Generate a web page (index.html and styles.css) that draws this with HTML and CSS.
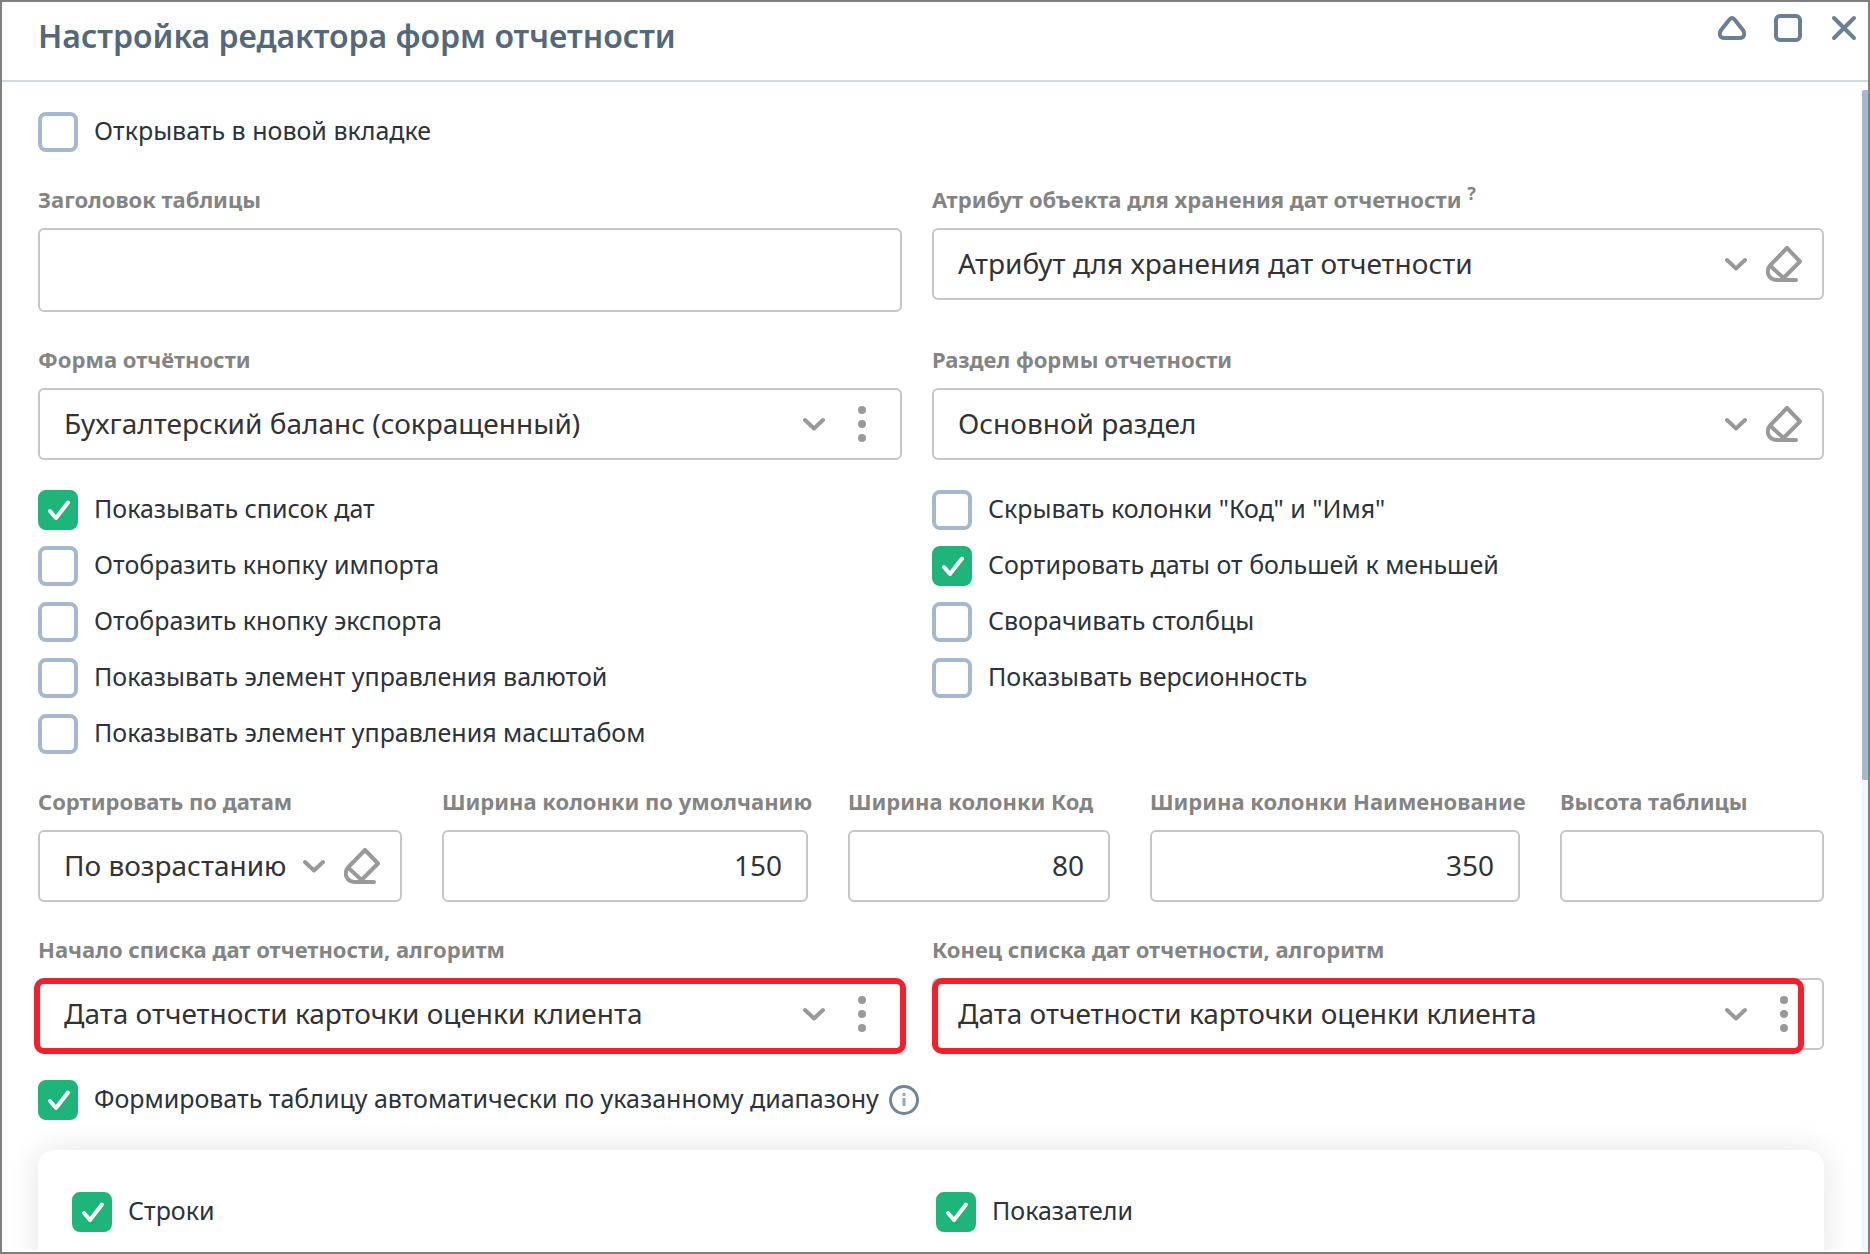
FILE: index.html
```html
<!DOCTYPE html>
<html lang="ru">
<head>
    <meta charset="UTF-8">
    <meta name="viewport" content="width=device-width, initial-scale=1.0">
    <title>Настройка редактора форм отчетности</title>
    <link rel="stylesheet" href="styles.css">
</head>

<body>
    <!-- Shared icons -->
    <svg class="sprite" aria-hidden="true">
        <symbol id="chevron" viewBox="0 0 24 14">
            <path d="M3 3l9 8.500L21 3" />
        </symbol>
        <symbol id="eraser" viewBox="0 0 36 36">
            <path d="M21 2L34 15.500L16 33.500M21 2L4 19.500L16.500 31M4 19.500C-1 26 3 34 11 34H30" />
        </symbol>
        <symbol id="dots" viewBox="0 0 8 36">
            <circle cx="4" cy="4" r="4" />
            <circle cx="4" cy="18" r="4" />
            <circle cx="4" cy="32" r="4" />
        </symbol>
    </svg>

    <div class="window">
        <header class="header">
            <h1>Настройка редактора форм отчетности</h1>
            <div class="window-buttons">
                <button type="button" aria-label="Свернуть">
                    <svg viewBox="0 0 28 28"><path d="M11.500 5.500Q14 2.500 16.500 5.500L24.500 15.500C28 20 25.500 24 22 24H6C2.500 24 0 20 3.500 15.500Z" /></svg>
                </button>
                <button type="button" aria-label="Развернуть">
                    <svg viewBox="0 0 28 28"><rect x="2" y="2" width="24" height="24" rx="4" /></svg>
                </button>
                <button type="button" aria-label="Закрыть">
                    <svg viewBox="0 0 28 28"><path d="M4 4L24 24M24 4L4 24" /></svg>
                </button>
            </div>
        </header>

        <div class="body">
            <form class="content">
                <label class="check"><input type="checkbox">Открывать в новой вкладке</label>

                <div class="row two">
                    <div class="field">
                        <label for="tableTitle">Заголовок таблицы</label>
                        <input type="text" id="tableTitle" class="box tall">
                    </div>
                    <div class="field">
                        <label for="dateAttr">Атрибут объекта для хранения дат отчетности <sup>?</sup></label>
                        <div class="box select">
                            <select id="dateAttr"><option>Атрибут для хранения дат отчетности</option></select>
                            <svg class="chevron"><use href="#chevron" /></svg>
                            <button type="button" aria-label="Очистить"><svg class="eraser"><use href="#eraser" /></svg></button>
                        </div>
                    </div>
                </div>

                <div class="row two">
                    <div class="field">
                        <label for="form">Форма отчётности</label>
                        <div class="box select">
                            <select id="form"><option>Бухгалтерский баланс (сокращенный)</option></select>
                            <svg class="chevron"><use href="#chevron" /></svg>
                            <button type="button" aria-label="Меню"><svg class="dots"><use href="#dots" /></svg></button>
                        </div>
                    </div>
                    <div class="field">
                        <label for="section">Раздел формы отчетности</label>
                        <div class="box select">
                            <select id="section"><option>Основной раздел</option></select>
                            <svg class="chevron"><use href="#chevron" /></svg>
                            <button type="button" aria-label="Очистить"><svg class="eraser"><use href="#eraser" /></svg></button>
                        </div>
                    </div>
                </div>

                <div class="checks two">
                    <div class="check-list">
                        <label class="check"><input type="checkbox" checked>Показывать список дат</label>
                        <label class="check"><input type="checkbox">Отобразить кнопку импорта</label>
                        <label class="check"><input type="checkbox">Отобразить кнопку экспорта</label>
                        <label class="check"><input type="checkbox">Показывать элемент управления валютой</label>
                        <label class="check"><input type="checkbox">Показывать элемент управления масштабом</label>
                    </div>
                    <div class="check-list">
                        <label class="check"><input type="checkbox">Скрывать колонки "Код" и "Имя"</label>
                        <label class="check"><input type="checkbox" checked>Сортировать даты от большей к меньшей</label>
                        <label class="check"><input type="checkbox">Сворачивать столбцы</label>
                        <label class="check"><input type="checkbox">Показывать версионность</label>
                    </div>
                </div>

                <div class="row five">
                    <div class="field">
                        <label for="sort">Сортировать по датам</label>
                        <div class="box select">
                            <select id="sort"><option>По возрастанию</option></select>
                            <svg class="chevron"><use href="#chevron" /></svg>
                            <button type="button" aria-label="Очистить"><svg class="eraser"><use href="#eraser" /></svg></button>
                        </div>
                    </div>
                    <div class="field">
                        <label for="widthDefault">Ширина колонки по умолчанию</label>
                        <input type="text" id="widthDefault" class="box number" value="150">
                    </div>
                    <div class="field">
                        <label for="widthCode">Ширина колонки Код</label>
                        <input type="text" id="widthCode" class="box number" value="80">
                    </div>
                    <div class="field">
                        <label for="widthName">Ширина колонки Наименование</label>
                        <input type="text" id="widthName" class="box number" value="350">
                    </div>
                    <div class="field">
                        <label for="tableHeight">Высота таблицы</label>
                        <input type="text" id="tableHeight" class="box number">
                    </div>
                </div>

                <div class="row two">
                    <div class="field">
                        <label for="dateStart">Начало списка дат отчетности, алгоритм</label>
                        <div class="box select">
                            <select id="dateStart"><option>Дата отчетности карточки оценки клиента</option></select>
                            <svg class="chevron"><use href="#chevron" /></svg>
                            <button type="button" aria-label="Меню"><svg class="dots"><use href="#dots" /></svg></button>
                            <span class="mark mark-start"></span>
                        </div>
                    </div>
                    <div class="field">
                        <label for="dateEnd">Конец списка дат отчетности, алгоритм</label>
                        <div class="box select">
                            <select id="dateEnd"><option>Дата отчетности карточки оценки клиента</option></select>
                            <svg class="chevron"><use href="#chevron" /></svg>
                            <button type="button" aria-label="Меню"><svg class="dots"><use href="#dots" /></svg></button>
                            <span class="mark mark-end"></span>
                        </div>
                    </div>
                </div>

                <div class="checks auto">
                    <label class="check"><input type="checkbox" checked>Формировать таблицу автоматически по указанному диапазону</label>
                    <svg class="info" viewBox="0 0 30 30">
                        <circle cx="15" cy="15" r="13.500" />
                        <path d="M15 8v3M15 13v8" stroke="#97a7b7" />
                    </svg>
                </div>

                <div class="panel">
                    <label class="check"><input type="checkbox" checked>Строки</label>
                    <label class="check"><input type="checkbox" checked>Показатели</label>
                </div>
            </form>
            <div class="scrollbar"><div class="thumb"></div></div>
        </div>
    </div>
</body>
</html>
```
FILE: styles.css
```css
* {
    box-sizing: border-box;
}

body {
    margin: 0;
    font-family: "Noto Sans", "Open Sans", sans-serif;
    font-size: 25px;
    color: #2b333b;
    background-color: #fff;
}

button {
    padding: 0;
    border: none;
    background: none;
    cursor: pointer;
}

svg {
    display: block;
    fill: none;
    stroke-linecap: round;
    stroke-linejoin: round;
}

.sprite {
    position: absolute;
    width: 0;
    height: 0;
}

.window {
    display: flex;
    flex-direction: column;
    height: 100vh;
    border: 2px solid #808080;
    overflow: hidden;
}

/* Header */
.header {
    display: flex;
    justify-content: space-between;
    align-items: flex-start;
    padding: 10px 10px 20px 36px;
    border-bottom: 2px solid #cdd9e8;
}

.header h1 {
    margin: 0;
    font-size: 32px;
    line-height: 48px;
    font-weight: 600;
    color: #54687b;
}

.window-buttons {
    display: flex;
    gap: 28px;
    padding-top: 2px;
}

.window-buttons svg {
    width: 28px;
    height: 28px;
    stroke: #687f96;
    stroke-width: 4;
}

/* Content */
.body {
    display: flex;
    flex: 1;
    min-height: 0;
    margin-bottom: 2px;
}

.content {
    flex: 1;
    min-width: 0;
    padding: 30px 38px 30px 36px;
    overflow: hidden;
}

.row {
    display: grid;
    margin-top: 34px;
}

.two {
    display: grid;
    grid-template-columns: 864fr 892fr;
    gap: 30px;
    align-items: start;
}

.five {
    grid-template-columns: 364fr 366fr 262fr 370fr 264fr;
    gap: 40px;
}

.checks {
    margin-top: 30px;
}

.check-list {
    display: flex;
    flex-direction: column;
    gap: 16px;
}

.check {
    display: flex;
    align-items: flex-start;
    gap: 16px;
    line-height: 36px;
    white-space: nowrap;
}

.check input {
    appearance: none;
    flex: none;
    width: 40px;
    height: 40px;
    margin: 0;
    border: 4px solid #a5b8cf;
    border-radius: 8px;
    background-color: #fff;
}

.check input:checked {
    border-color: #1fb57a;
    background: #1fb57a url("data:image/svg+xml,%3Csvg xmlns='http://www.w3.org/2000/svg' viewBox='0 0 32 32'%3E%3Cpath d='M8 17l6 7L26 8.500' fill='none' stroke='white' stroke-width='4' stroke-linecap='round' stroke-linejoin='round'/%3E%3C/svg%3E") center / 32px no-repeat;
}

/* Fields */
.field {
    min-width: 0;
}

.field label {
    display: block;
    margin-bottom: 16px;
    font-size: 22px;
    line-height: 26px;
    font-weight: 700;
    color: #848484;
    white-space: nowrap;
}

.field sup {
    font-size: 18px;
    line-height: 0;
}

.box {
    display: block;
    width: 100%;
    height: 72px;
    padding: 0 24px 2px;
    border: 2px solid #c6c6c6;
    border-radius: 6px;
    font-family: inherit;
    font-size: 28px;
    color: #333;
    background-color: #fff;
}

.tall {
    height: 84px;
}

.number {
    text-align: right;
}

.select {
    position: relative;
    display: flex;
    align-items: center;
    padding: 0 20px 0 24px;
}

.select select {
    appearance: none;
    flex: 1;
    min-width: 0;
    height: 100%;
    padding: 0 0 2px;
    border: none;
    font: inherit;
    color: inherit;
    background: none;
}

.select button {
    display: flex;
    justify-content: center;
    width: 36px;
    margin-left: 18px;
}

.chevron {
    flex: none;
    width: 24px;
    height: 14px;
    stroke: #999;
    stroke-width: 4;
}

.eraser {
    width: 36px;
    height: 36px;
    stroke: #999;
    stroke-width: 4;
}

.dots {
    width: 8px;
    height: 36px;
    fill: #999;
}

/* Red frames over the date fields */
.mark {
    position: absolute;
    top: -2px;
    bottom: -6px;
    border: 6px solid #f51f2b;
    border-radius: 10px;
    pointer-events: none;
}

.mark-start {
    left: -6px;
    right: -6px;
}

.mark-end {
    left: -2px;
    right: 18px;
}

.auto {
    display: flex;
    align-items: center;
    gap: 10px;
}

.info {
    width: 30px;
    height: 30px;
    stroke: #6f869d;
    stroke-width: 3;
    stroke-linecap: butt;
}

.panel {
    display: grid;
    grid-template-columns: 1fr 1fr;
    margin-top: 30px;
    padding: 42px 24px 42px 34px;
    border-radius: 16px;
    box-shadow: 0 0 32px rgba(0, 0, 0, 0.11);
}

/* Scrollbar */
.scrollbar {
    width: 6px;
    margin-top: 8px;
    background-color: #f2f5fa;
}

.thumb {
    height: 59.5%;
    border-radius: 2px 0 0 2px;
    background-color: #a5b8cf;
}
```
